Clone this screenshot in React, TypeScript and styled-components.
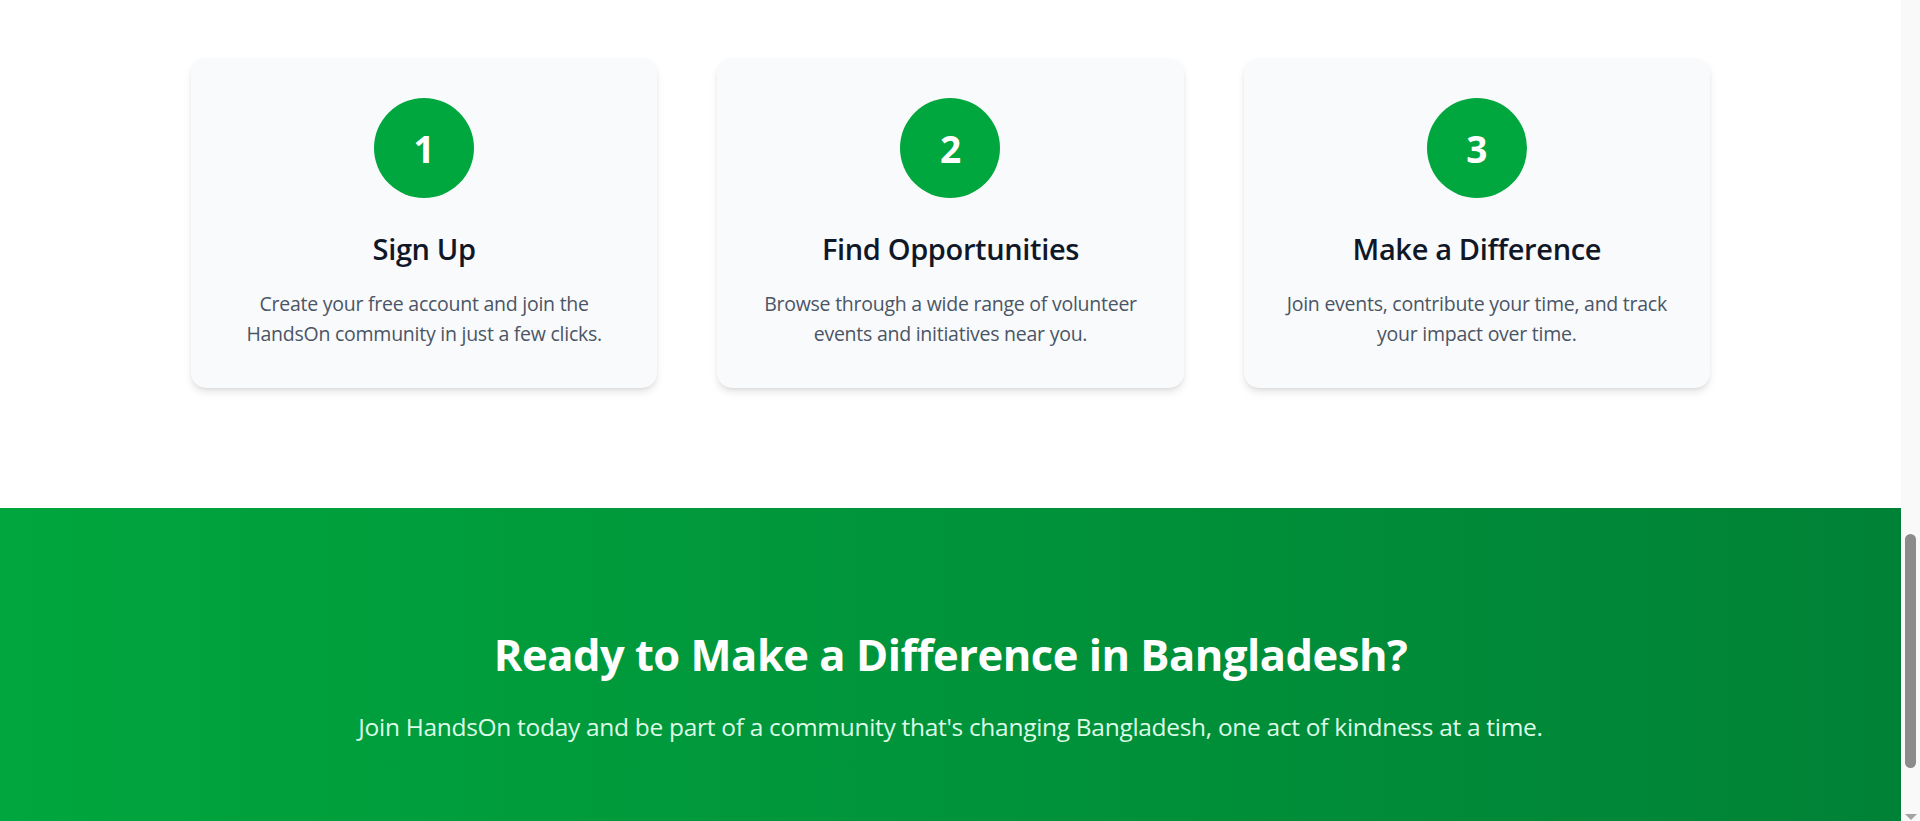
import React from "react";
import styled, { createGlobalStyle } from "styled-components";

const GlobalStyle = createGlobalStyle`
  html, body {
    margin: 0;
    padding: 0;
    overflow: hidden;
    background: #ffffff;
  }
  body {
    font-family: "Open Sans", "Noto Sans", sans-serif;
    -webkit-font-smoothing: antialiased;
  }
  * { box-sizing: border-box; }
`;

const Shell = styled.div`
  display: flex;
  height: 821px;
  overflow: hidden;
`;

const Page = styled.main`
  flex: 1;
  min-width: 0;
  display: flex;
  flex-direction: column;
`;

const StepsSection = styled.section`
  padding: 58px 0 120px;
  background: #ffffff;
`;

const StepsGrid = styled.div`
  max-width: 1519px;
  margin: 0 auto;
  display: grid;
  grid-template-columns: repeat(3, minmax(0, 1fr));
  gap: 60px;
`;

const StepCard = styled.div`
  background: #f9fafb;
  border-radius: 15px;
  padding: 40px 40px 39px;
  box-shadow: 0 5px 8px -1px rgba(0, 0, 0, 0.1), 0 2px 5px -2px rgba(0, 0, 0, 0.1);
  display: flex;
  flex-direction: column;
  align-items: center;
  text-align: center;
`;

const StepNumber = styled.div`
  width: 100px;
  height: 100px;
  border-radius: 50%;
  background: #00a63e;
  color: #ffffff;
  display: flex;
  align-items: center;
  justify-content: center;
  font-size: 37px;
  font-weight: 700;
`;

const StepTitle = styled.h3`
  margin: 31px 0 0;
  font-size: 29px;
  line-height: 40px;
  font-weight: 600;
  letter-spacing: -0.35px;
  color: #101828;
`;

const StepText = styled.p`
  margin: 20px 0 0;
  font-size: 19.5px;
  line-height: 30px;
  letter-spacing: -0.25px;
  color: #4a5565;
  white-space: nowrap;
`;

const CtaSection = styled.section`
  flex: 1;
  background: linear-gradient(to right in oklab, #00a63e, #008236);
  padding-top: 122px;
  text-align: center;
`;

const CtaTitle = styled.h2`
  margin: 0 0 29px;
  font-size: 43.5px;
  line-height: 50px;
  font-weight: 700;
  letter-spacing: -0.5px;
  color: #ffffff;
`;

const CtaText = styled.p`
  margin: 0;
  font-size: 24.5px;
  line-height: 35px;
  letter-spacing: -0.3px;
  color: #dcfce7;
`;

const ScrollTrack = styled.div`
  width: 19px;
  flex-shrink: 0;
  background: #f9f9f9;
  display: flex;
  flex-direction: column;
  align-items: center;
`;

const ScrollThumb = styled.div`
  margin-top: 534px;
  width: 11px;
  height: 234px;
  border-radius: 6px;
  background: #8b8b8b;
`;

const ScrollArrow = styled.div`
  margin-top: auto;
  margin-bottom: 1px;
  width: 0;
  height: 0;
  border-left: 6.5px solid transparent;
  border-right: 6.5px solid transparent;
  border-top: 6px solid #a3a3a3;
`;

const steps = [
  {
    n: 1,
    title: "Sign Up",
    lines: ["Create your free account and join the", "HandsOn community in just a few clicks."],
  },
  {
    n: 2,
    title: "Find Opportunities",
    lines: ["Browse through a wide range of volunteer", "events and initiatives near you."],
  },
  {
    n: 3,
    title: "Make a Difference",
    lines: ["Join events, contribute your time, and track", "your impact over time."],
  },
];

export default function App() {
  return (
    <>
      <GlobalStyle />
      <Shell>
        <Page>
          <StepsSection>
            <StepsGrid>
              {steps.map((s) => (
                <StepCard key={s.n}>
                  <StepNumber>{s.n}</StepNumber>
                  <StepTitle>{s.title}</StepTitle>
                  <StepText>
                    {s.lines[0]}
                    <br />
                    {s.lines[1]}
                  </StepText>
                </StepCard>
              ))}
            </StepsGrid>
          </StepsSection>
          <CtaSection>
            <CtaTitle>Ready to Make a Difference in Bangladesh?</CtaTitle>
            <CtaText>
              Join HandsOn today and be part of a community that's changing Bangladesh, one act of kindness at a time.
            </CtaText>
          </CtaSection>
        </Page>
        <ScrollTrack>
          <ScrollThumb />
          <ScrollArrow />
        </ScrollTrack>
      </Shell>
    </>
  );
}
